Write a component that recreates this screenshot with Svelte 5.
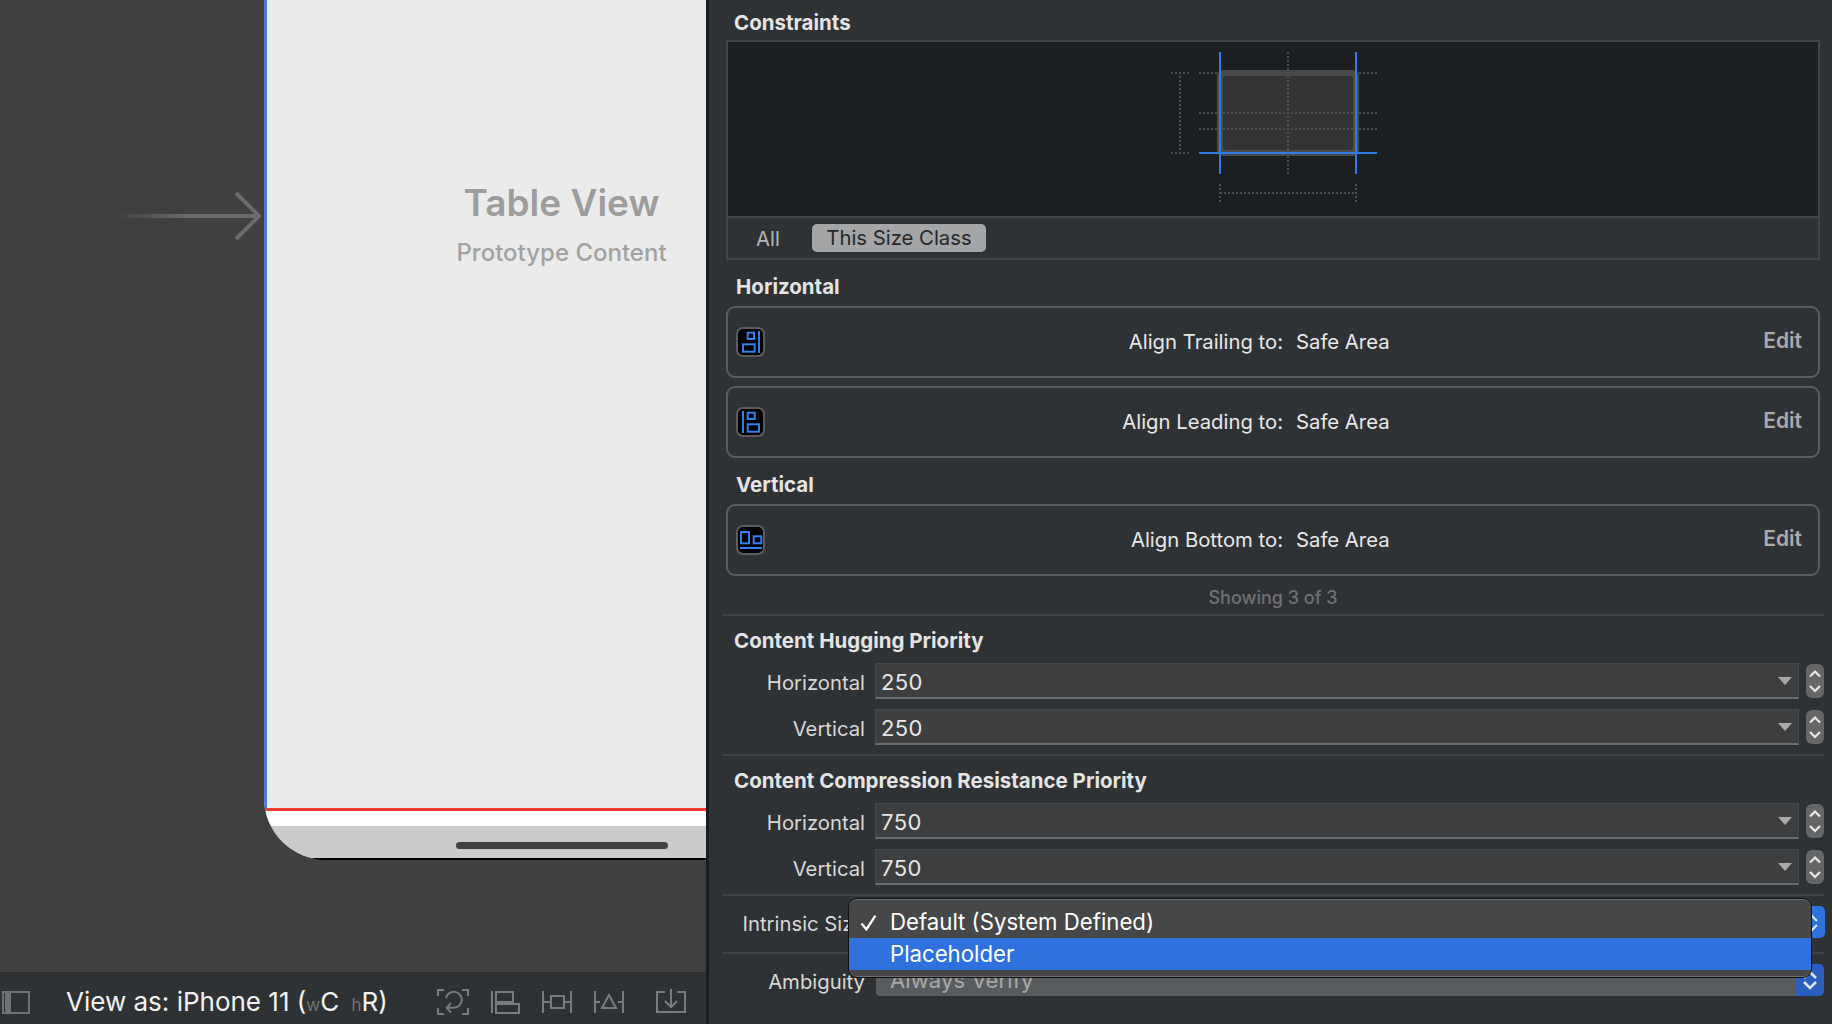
<script>
  const rows1 = [
    { label: 'Horizontal', items: [
      { text: 'Align Trailing to:', kind: 'trailing' },
      { text: 'Align Leading to:', kind: 'leading' } ] },
    { label: 'Vertical', items: [ { text: 'Align Bottom to:', kind: 'bottom' } ] }
  ];
  const prio = [
    { title: 'Content Hugging Priority', cls: '', sep: 's2', rows: [['Horizontal', '250'], ['Vertical', '250']] },
    { title: 'Content Compression Resistance Priority', cls: 'p2', sep: 's3', rows: [['Horizontal', '750'], ['Vertical', '750']] }
  ];
</script>

<div class="app">
  <div class="canvas">
    <div class="arrow-line"></div>
    <svg class="arrow-head" width="30" height="50" viewBox="0 0 30 50"><path d="M3 2 L26 25 L3 48" fill="none" stroke="#6b6b6b" stroke-width="4"/></svg>
    <div class="device">
      <div class="screen">
        <div class="tv-title">Table View</div>
        <div class="tv-sub">Prototype Content</div>
      </div>
      <div class="white-band"></div>
      <div class="home-area"><div class="home-bar"></div></div>
    </div>
    <div class="bottom-bar">
      <svg class="ic-side" width="30" height="26" viewBox="0 0 30 26"><rect x="2" y="3" width="26" height="21" fill="none" stroke="#6f7172" stroke-width="2"/><rect x="4" y="4" width="6" height="19" fill="#6f7172"/></svg>
      <div class="view-as">View as: iPhone 11 (<span class="sm">w</span>C <span class="sm hs">h</span>R)</div>
      <div class="tools">
        <svg width="32" height="28" viewBox="0 0 32 28" fill="none" stroke="#787a7b" stroke-width="2"><path d="M1 8V2H7M25 2H31V8M1 20V26H7M25 26H31V20"/><path d="M10 19.700H16A8 8 0 1 0 9 10"/><path d="M14 15L9.700 19.700L14 24.700"/></svg>
        <svg width="32" height="28" viewBox="0 0 32 28" fill="none" stroke="#787a7b" stroke-width="2"><path d="M3 3V25"/><rect x="7" y="4" width="17" height="10"/><rect x="7" y="16" width="23" height="9"/></svg>
        <svg width="32" height="28" viewBox="0 0 32 28" fill="none" stroke="#787a7b" stroke-width="2"><path d="M2 3V25M30 3V25M2 14H10M23 14H30"/><rect x="10" y="8" width="13" height="12"/></svg>
        <svg width="32" height="28" viewBox="0 0 32 28" fill="none" stroke="#787a7b" stroke-width="2"><path d="M2 3V25M30 3V25M2 14H7M25 14H30"/><path d="M16 7L23 20H9Z"/></svg>
        <svg class="dl" width="32" height="28" viewBox="0 0 32 28" fill="none" stroke="#787a7b" stroke-width="2"><path d="M10 4H2V24H30V4H22"/><path d="M16 1V19M10 13L16 19L22 13"/></svg>
      </div>
    </div>
  </div>

  <div class="panel">
    <div class="h head-c">Constraints</div>
    <div class="cbox">
      <div class="cdraw">
        <svg width="1092" height="175" viewBox="0 0 1092 175">
          <rect x="488" y="28" width="142" height="86" rx="6" fill="#4a4a4b"/>
          <rect x="494" y="34" width="130" height="74" rx="3" fill="#333333"/>
          <g stroke="#4b4d4e" stroke-width="2" stroke-dasharray="2 2" fill="none">
            <path d="M470 31H648M470 71H648M470 87H648M559 10V132"/>
            <path d="M442 31H460M442 111H460M451 34V108"/>
            <path d="M491 151H627M491 142V160M627 142V160"/>
          </g>
          <g stroke="#2f7bea" stroke-width="2" fill="none">
            <path d="M491 10V132M627 10V132M470 111H648"/>
          </g>
        </svg>
      </div>
      <div class="tabs"><span class="tab-all">All</span><span class="tab-on">This Size Class</span></div>
    </div>

    {#each rows1 as group}
      <div class="h group-h">{group.label}</div>
      {#each group.items as it}
        <div class="card">
          <div class="badge">
            <svg width="25" height="26" viewBox="0 0 25 26" fill="none" stroke="#2f80f0" stroke-width="2">
              {#if it.kind === 'trailing'}
                <rect x="9.700" y="3.700" width="6.300" height="6.300"/><rect x="5" y="15.300" width="11.700" height="7.400"/><path d="M21 2V24"/>
              {:else if it.kind === 'leading'}
                <rect x="9.700" y="3.700" width="7" height="6.300"/><rect x="9.700" y="15.300" width="11.300" height="7.400"/><path d="M5 2V24"/>
              {:else}
                <rect x="3" y="5" width="8" height="11.300"/><rect x="15.700" y="9.300" width="7.600" height="7"/><path d="M2 21H24"/>
              {/if}
            </svg>
          </div>
          <div class="c-label">{it.text}</div>
          <div class="c-val">Safe Area</div>
          <div class="c-edit">Edit</div>
        </div>
      {/each}
    {/each}

    <div class="showing">Showing 3 of 3</div>
    <div class="sep"></div>

    {#each prio as p}
      <div class="h prio-h {p.cls}">{p.title}</div>
      {#each p.rows as r, i}
        <div class="frow" class:r2={i === 1}>
          <div class="flabel">{r[0]}</div>
          <div class="field"><span>{r[1]}</span><i class="tri"></i></div>
          <svg class="step" width="18" height="34" viewBox="0 0 18 34"><rect width="18" height="34" rx="6" fill="#646668"/><path d="M4 12.500L9 7.500L14 12.500M4 22L9 27L14 22" fill="none" stroke="#e8e8e8" stroke-width="2.200"/></svg>
        </div>
      {/each}
      <div class="sep {p.sep}"></div>
    {/each}

    <div class="irow">
      <div class="flabel">Intrinsic Size</div>
      <div class="bluestep"><svg width="28" height="32" viewBox="0 0 28 32"><path d="M8 15L14 9L20 15M8 19L14 25L20 19" fill="none" stroke="#dfe6f5" stroke-width="2.200"/></svg></div>
    </div>
    <div class="sep s4"></div>
    <div class="arow">
      <div class="flabel">Ambiguity</div>
      <div class="afield"><span>Always Verify</span></div>
      <div class="ablue"><svg width="28" height="32" viewBox="0 0 28 32"><path d="M8 14L14 8L20 14M8 18L14 24L20 18" fill="none" stroke="#dfe6f5" stroke-width="2.500"/></svg></div>
    </div>

    <div class="menu">
      <div class="m-item"><svg class="check" width="17" height="17" viewBox="0 0 16 16"><path d="M1.500 9L6 14.500L14.500 1.500" fill="none" stroke="#fff" stroke-width="2.200"/></svg>Default (System Defined)</div>
      <div class="m-item sel">Placeholder</div>
    </div>
  </div>
</div>

<style>
  :global(body) { margin: 0; background: #2f3235; }
  .app { display: flex; width: 1832px; height: 1024px; overflow: hidden; font-family: Inter, "Liberation Sans", sans-serif; position: relative; }

  .canvas { position: relative; width: 706px; height: 1024px; background: #404040; flex: none; }
  .arrow-line { position: absolute; left: 118px; top: 214px; width: 140px; height: 4px; background: linear-gradient(90deg, rgba(107,107,107,0), #6b6b6b 50%); }
  .arrow-head { position: absolute; left: 233px; top: 191px; }
  .device { position: absolute; left: 264px; top: 0; width: 442px; height: 860px; display: flex; flex-direction: column; border-bottom-left-radius: 62px; overflow: hidden; }
  .screen { height: 811px; flex: none; box-sizing: border-box; background: #ebebeb; border-left: 3px solid #4a78e0; border-bottom: 3px solid #f23a32; display: flex; flex-direction: column; align-items: center; padding: 181px 0 0 150px; }
  .tv-title { font-size: 37px; font-weight: 600; color: #9d9d9d; line-height: 44px; }
  .tv-sub { font-size: 24px; font-weight: 500; color: #a2a2a2; line-height: 30px; margin-top: 12.500px; white-space: nowrap; }
  .white-band { height: 15px; background: #fff; flex: none; border-left: 1px solid #000; }
  .home-area { flex: 1; background: #cbcbcb; border-bottom: 2px solid #000; border-left: 1px solid #000; border-bottom-left-radius: 62px; position: relative; }
  .home-bar { position: absolute; left: 191px; top: 16px; width: 212px; height: 7px; border-radius: 4px; background: #414141; }

  .bottom-bar { position: absolute; left: 0; right: 0; bottom: 0; height: 52px; background: #2f3235; display: flex; align-items: center; }
  .ic-side { margin-left: 1px; margin-top: 8px; flex: none; }
  .view-as { margin-left: 35px; font-size: 26px; color: #f2f2f2; white-space: nowrap; font-weight: 400; margin-top: 7px; }
  .sm { font-size: 17px; color: #6f7172; }
  .sm.hs { margin-left: 5px; }
  .tools { position: absolute; left: 437px; top: 16px; display: flex; gap: 20px; }
  .tools .dl { margin-left: 10px; }

  .panel { position: relative; flex: 1; box-sizing: border-box; border-left: 3px solid #1c1e20; padding: 0 7px 0 17px; background: #2f3235; color: #e6e6e6; }
  .h { font-size: 20.500px; font-weight: 700; color: #e4e4e4; line-height: 24px; }
  .head-c { padding: 11px 0 0 8px; height: 40px; box-sizing: border-box; }
  .cbox { width: 1094px; height: 220px; box-sizing: border-box; border: 2px solid #434445; }
  .cdraw { height: 174px; background: #1c1f21; border-bottom: 2px solid #434445; overflow: hidden; }
  .cdraw svg { display: block; margin-left: 1px; }
  .tabs { height: 40px; display: flex; align-items: center; font-size: 20.300px; padding-left: 28px; }
  .tab-all { color: #b6b6b6; margin-right: 32px; }
  .tab-on { background: #a3a5a6; color: #26282a; border-radius: 5px; padding: 0 14.500px; height: 28px; line-height: 28px; }

  .group-h { padding-left: 10px; height: 46px; box-sizing: border-box; padding-top: 15px; }
  .card { width: 1094px; height: 72px; box-sizing: border-box; border: 2px solid #5a5c5e; border-radius: 9px; display: flex; align-items: center; margin-bottom: 8px; font-size: 20.300px; }
  .card + .group-h { height: 46px; padding-top: 15px; margin-top: -8px; }
  .badge { margin-left: 8px; width: 29px; height: 30px; margin-top: -1px; box-sizing: border-box; background: #000; border: 2px solid #5a5c5e; border-radius: 7px; display: flex; align-items: center; justify-content: center; flex: none; }
  .badge svg { display: block; flex: none; }
  .c-label { width: 518px; text-align: right; flex: none; color: #e8e8e8; margin-top: -2px; }
  .c-val { margin-left: 13px; flex: 1; color: #e8e8e8; margin-top: -2px; }
  .c-edit { font-weight: 600; color: #a8aaac; margin-right: 16px; margin-top: -3px; font-size: 21px; }

  .showing { margin-top: -8px; height: 38px; line-height: 44px; width: 1094px; text-align: center; font-size: 18px; color: #6f7173; font-weight: 500; }
  .sep { height: 2px; background: #3f4143; margin-left: -4px; width: 1102px; }
  .prio-h { padding: 13px 0 0 8px; height: 47px; box-sizing: border-box; }
  .frow { display: flex; align-items: center; height: 36px; }
  .frow.r2 { margin-top: 10px; }
  .flabel { width: 139px; text-align: right; font-size: 20.300px; color: #d8d8d8; flex: none; white-space: nowrap; padding-top: 2px; }
  .field { margin-left: 10px; width: 924px; height: 36px; box-sizing: border-box; background: #3c3e40; border: 1px solid #45474a; border-bottom: 2px solid #6a6c6e; display: flex; align-items: center; justify-content: space-between; padding: 0 6px 0 5px; font-size: 22px; letter-spacing: 0.400px; color: #e6e6e6; flex: none; }
  .field span { padding-top: 2px; }
  .tri { width: 0; height: 0; border-left: 7px solid transparent; border-right: 7px solid transparent; border-top: 8px solid #a8a8a8; margin-top: 1px; }
  .step { margin-left: 7px; flex: none; }
  .sep.s2, .sep.s3 { margin-top: 9px; }
  .sep.s4 { margin-top: 14px; }
  .irow { display: flex; align-items: center; height: 32px; margin-top: 10px; justify-content: space-between; }
  .bluestep { width: 28px; height: 32px; background: #2e72de; border-radius: 0 5px 5px 0; }
  .arow { display: flex; align-items: center; height: 32px; margin-top: 10px; }
  .afield { margin-left: 11px; width: 920px; height: 32px; box-sizing: border-box; background: #595c5e; padding-left: 14px; font-size: 22px; letter-spacing: 0.100px; color: #a8a9aa; line-height: 32px; flex: none; border-radius: 4px 0 0 4px; }
  .ablue { width: 28px; height: 32px; background: #2a5fc0; border-radius: 0 5px 5px 0; flex: none; }
  .bluestep svg, .ablue svg { display: block; }

  .menu { position: absolute; left: 139px; top: 898px; width: 964px; height: 80px; box-sizing: border-box; background: #454749; border: 1px solid #111; box-shadow: inset 0 1px 0 #6a6c6e, inset 0 -1px 0 #6a6c6e; border-radius: 9px; padding-top: 7px; overflow: hidden; }
  .m-item { height: 32px; line-height: 32px; padding-left: 41px; font-size: 22.200px; color: #fff; position: relative; white-space: nowrap; }
  .check { position: absolute; left: 11px; top: 8px; }
  .m-item.sel { background: #2f72df; }
</style>
